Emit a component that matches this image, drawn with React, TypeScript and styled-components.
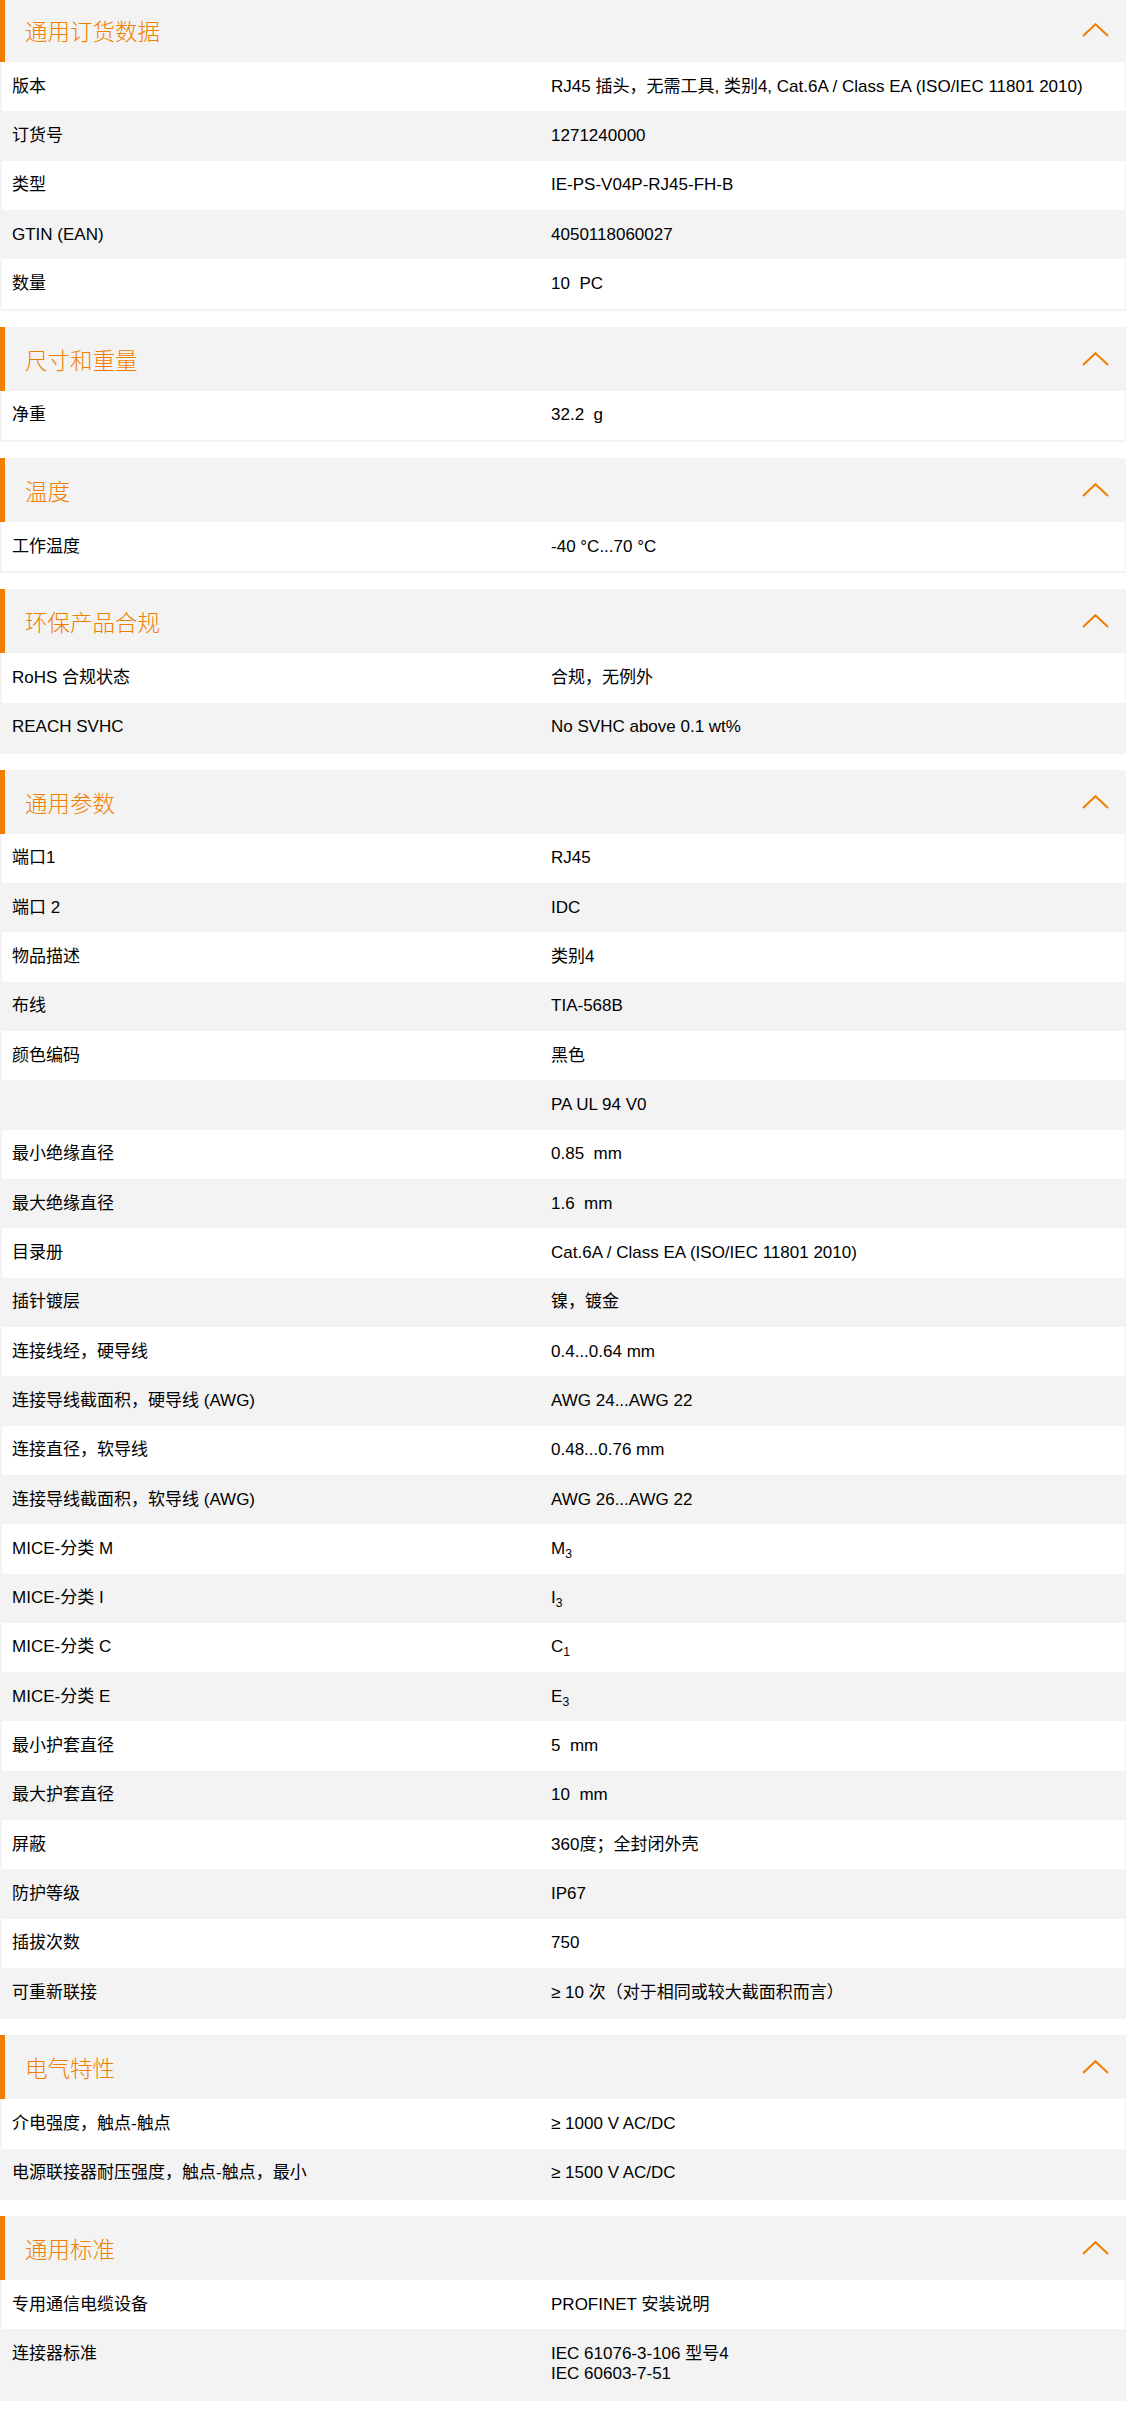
import React from "react";
import styled, { createGlobalStyle } from "styled-components";

const ORANGE = "#f07f00";
const GRAY = "#f3f3f3";

const GlobalStyle = createGlobalStyle`
  html, body { margin: 0; padding: 0; background: #fff; }
  body {
    font-family: "Liberation Sans", "Noto Sans CJK SC", sans-serif;
    color: #000;
    -webkit-font-smoothing: antialiased;
  }
  * { box-sizing: border-box; }
`;

const Page = styled.main`
  display: flex;
  flex-direction: column;
  margin-top: -2px;
`;

const Section = styled.section`
  display: flex;
  flex-direction: column;
  margin-bottom: 16px;
`;

const Header = styled.header`
  height: 64px;
  display: flex;
  align-items: center;
  justify-content: space-between;
  background: ${GRAY};
  border-left: 5px solid ${ORANGE};
  padding: 0 17px 0 20px;
`;

const Title = styled.h2`
  margin: 0;
  font-size: 22.5px;
  font-weight: 300;
  color: ${ORANGE};
  font-family: "Liberation Sans", "Noto Sans CJK SC", sans-serif;
`;

const Body = styled.div`
  display: flex;
  flex-direction: column;
  background: ${GRAY};
  padding: 0 1px 2px 2px;
`;

const Row = styled.div<{ $odd: boolean }>`
  display: grid;
  grid-template-columns: 48% 1fr;
  background: ${(p) => (p.$odd ? "#fff" : GRAY)};
  font-size: 17px;
  line-height: 20px;
`;

const Cell = styled.div`
  padding: 14.66px 10px;
  white-space: pre-line;
`;

const Sub = styled.sub`
  font-size: 0.72em;
  line-height: 0;
  vertical-align: -0.3em;
`;

function Chevron() {
  return (
    <svg width="27" height="14" viewBox="0 0 27 14" aria-hidden="true">
      <polyline
        points="1,13 13.5,1.2 26,13"
        fill="none"
        stroke={ORANGE}
        strokeWidth="2"
      />
    </svg>
  );
}

type Item = [string, React.ReactNode];

const S = ({ b, s }: { b: string; s: string }) => (
  <>
    {b}
    <Sub>{s}</Sub>
  </>
);

const data: { title: string; rows: Item[] }[] = [
  {
    title: "通用订货数据",
    rows: [
      ["版本", "RJ45 插头，无需工具, 类别4, Cat.6A / Class EA (ISO/IEC 11801 2010)"],
      ["订货号", "1271240000"],
      ["类型", "IE-PS-V04P-RJ45-FH-B"],
      ["GTIN (EAN)", "4050118060027"],
      ["数量", "10\u00a0 PC"],
    ],
  },
  { title: "尺寸和重量", rows: [["净重", "32.2\u00a0 g"]] },
  { title: "温度", rows: [["工作温度", "-40 °C...70 °C"]] },
  {
    title: "环保产品合规",
    rows: [
      ["RoHS 合规状态", "合规，无例外"],
      ["REACH SVHC", "No SVHC above 0.1 wt%"],
    ],
  },
  {
    title: "通用参数",
    rows: [
      ["端口1", "RJ45"],
      ["端口 2", "IDC"],
      ["物品描述", "类别4"],
      ["布线", "TIA-568B"],
      ["颜色编码", "黑色"],
      ["", "PA UL 94 V0"],
      ["最小绝缘直径", "0.85\u00a0 mm"],
      ["最大绝缘直径", "1.6\u00a0 mm"],
      ["目录册", "Cat.6A / Class EA (ISO/IEC 11801 2010)"],
      ["插针镀层", "镍，镀金"],
      ["连接线经，硬导线", "0.4...0.64 mm"],
      ["连接导线截面积，硬导线 (AWG)", "AWG 24...AWG 22"],
      ["连接直径，软导线", "0.48...0.76 mm"],
      ["连接导线截面积，软导线 (AWG)", "AWG 26...AWG 22"],
      ["MICE-分类 M", <S b="M" s="3" />],
      ["MICE-分类 I", <S b="I" s="3" />],
      ["MICE-分类 C", <S b="C" s="1" />],
      ["MICE-分类 E", <S b="E" s="3" />],
      ["最小护套直径", "5\u00a0 mm"],
      ["最大护套直径", "10\u00a0 mm"],
      ["屏蔽", "360度；全封闭外壳"],
      ["防护等级", "IP67"],
      ["插拔次数", "750"],
      ["可重新联接", "≥ 10 次（对于相同或较大截面积而言）"],
    ],
  },
  {
    title: "电气特性",
    rows: [
      ["介电强度，触点-触点", "≥ 1000 V AC/DC"],
      ["电源联接器耐压强度，触点-触点，最小", "≥ 1500 V AC/DC"],
    ],
  },
  {
    title: "通用标准",
    rows: [
      ["专用通信电缆设备", "PROFINET 安装说明"],
      ["连接器标准", "IEC 61076-3-106 型号4\nIEC 60603-7-51"],
    ],
  },
];

export default function App() {
  return (
    <>
      <GlobalStyle />
      <Page>
        {data.map((sec) => (
          <Section key={sec.title}>
            <Header>
              <Title>{sec.title}</Title>
              <Chevron />
            </Header>
            <Body>
              {sec.rows.map(([label, value], i) => (
                <Row key={i} $odd={i % 2 === 0}>
                  <Cell>{label}</Cell>
                  <Cell>{value}</Cell>
                </Row>
              ))}
            </Body>
          </Section>
        ))}
      </Page>
    </>
  );
}
